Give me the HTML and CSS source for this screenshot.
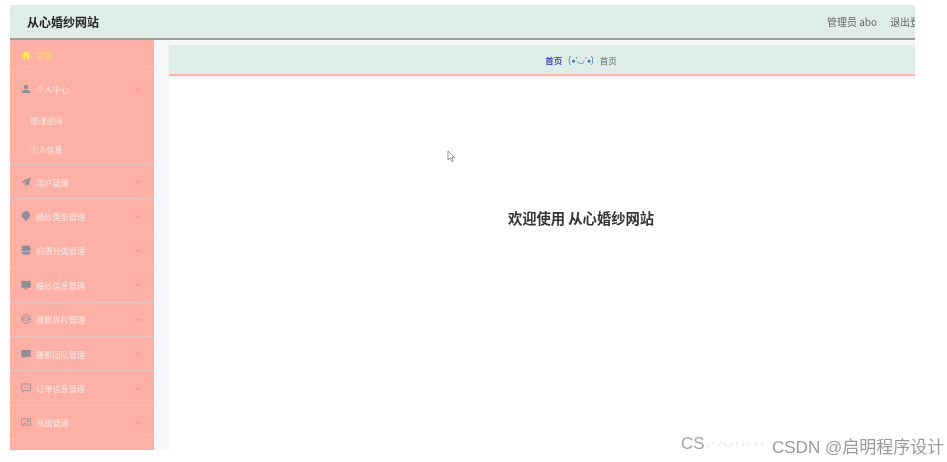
FILE: index.html
```html
<!DOCTYPE html>
<html lang="zh">
<head>
<meta charset="utf-8">
<title>从心婚纱网站</title>
<link rel="stylesheet" href="styles.css">
</head>
<body>
<div class="app">
  <header class="topbar">
    <div class="brand">从心婚纱网站</div>
    <div class="user"><span>管理员 abo</span><span class="logout">退出登录</span></div>
  </header>
  <div class="main">
    <nav class="side">
      <div class="item home">
        <svg class="ico" viewBox="0 0 16 16"><path d="M8 1.500 .5 8.500h2V15h4v-4h3v4h4V8.500h2z"/></svg>
        <span>首页</span>
      </div>
      <div class="group">
        <div class="item head">
          <svg class="ico" viewBox="0 0 16 16"><circle cx="8" cy="4.500" r="3.500"/><path d="M1 14.500c0-4 3-5.500 7-5.500s7 1.500 7 5.500z"/></svg>
          <span>个人中心</span>
          <svg class="arrow" viewBox="0 0 10 6"><path d="M1 5 5 1.500 9 5"/></svg>
        </div>
        <div class="sub">修改密码</div>
        <div class="sub">个人信息</div>
      </div>
      <div class="item row">
        <svg class="ico" viewBox="0 0 16 16"><path d="M15.500 .5 .5 8l4 1.500L12.500 4 6 10.500V15.500l3-3.500 3.500 1.500z"/></svg>
        <span>用户管理</span>
        <svg class="arrow" viewBox="0 0 10 6"><path d="M1 1.500 5 5 9 1.500"/></svg>
      </div>
      <div class="item row">
        <svg class="ico" viewBox="0 0 16 16"><path d="M8 .5a6.500 6.500 0 0 0-3.500 12c.6.400 1.500 1 1.500 1.500h4c0-.5.900-1.100 1.500-1.500A6.500 6.500 0 0 0 8 .5zM6.500 14.500h3V16h-3z"/></svg>
        <span>婚纱类型管理</span>
        <svg class="arrow" viewBox="0 0 10 6"><path d="M1 1.500 5 5 9 1.500"/></svg>
      </div>
      <div class="item row">
        <svg class="ico" viewBox="0 0 16 16"><path d="M3 1h10a2 2 0 0 1 2 2v7H1V3a2 2 0 0 1 2-2zM1 11h14v2l-2 2H3l-2-2z"/></svg>
        <span>拍摄分类管理</span>
        <svg class="arrow" viewBox="0 0 10 6"><path d="M1 1.500 5 5 9 1.500"/></svg>
      </div>
      <div class="item row">
        <svg class="ico" viewBox="0 0 16 16"><path d="M.5 1.500h15v11H.5zM5 13.500h6V15H5z"/></svg>
        <span>婚纱信息管理</span>
        <svg class="arrow" viewBox="0 0 10 6"><path d="M1 1.500 5 5 9 1.500"/></svg>
      </div>
      <div class="item row">
        <svg class="ico line" viewBox="0 0 16 16"><circle cx="8" cy="8" r="7"/><circle cx="8" cy="8" r="3.500"/><path d="M1 8h3.500M11.500 8H15"/></svg>
        <span>摄影样片管理</span>
        <svg class="arrow" viewBox="0 0 10 6"><path d="M1 1.500 5 5 9 1.500"/></svg>
      </div>
      <div class="item row">
        <svg class="ico" viewBox="0 0 16 16"><path d="M.5 1.500h15v11H7l-3 3v-3H.5z"/></svg>
        <span>摄影团队管理</span>
        <svg class="arrow" viewBox="0 0 10 6"><path d="M1 1.500 5 5 9 1.500"/></svg>
      </div>
      <div class="item row">
        <svg class="ico line" viewBox="0 0 16 16"><path d="M1 1.500h14v10.500H6l-3 3V12H1zM4.500 7h1.200M7.400 7h1.200M10.300 7h1.200"/></svg>
        <span>订单信息管理</span>
        <svg class="arrow" viewBox="0 0 10 6"><path d="M1 1.500 5 5 9 1.500"/></svg>
      </div>
      <div class="item row">
        <svg class="ico line" viewBox="0 0 16 16"><path d="M.5 3h15v10H.5zM3.500 10h5M10.500 6h2v2h-2z"/></svg>
        <span>系统管理</span>
        <svg class="arrow" viewBox="0 0 10 6"><path d="M1 1.500 5 5 9 1.500"/></svg>
      </div>
    </nav>
    <section class="content">
      <div class="crumb">
        <span class="link">首页</span>
        <span class="face">(<span class="dot">●</span>'◡'<span class="dot">●</span>)</span>
        <span>首页</span>
      </div>
      <div class="welcome">欢迎使用 从心婚纱网站</div>
    </section>
  </div>
</div>
<svg class="cursor" viewBox="0 0 9 13"><path d="M1 1v9l2.200-2 1.600 3.500 1.500-.7-1.600-3.300H7.500z"/></svg>
<div class="ghost">CS</div>
<svg class="noise" viewBox="0 0 70 12"><path d="M1 6l3-3M6 9l3-2M12 4l2 3M18 8l3-4M24 5l2 3M30 9l3-4M36 4l2 2M42 8l3-3M48 5l3 3M55 8l2-4M61 5l3 3"/></svg>
<div class="mark">CSDN @启明程序设计</div>
</body>
</html>
```
FILE: styles.css
```css
* { box-sizing: border-box; }
html, body { margin: 0; height: 100%; background: #fff; overflow: hidden; }
body { padding: 5px 32px 12px 10px; font-family: "Noto Sans CJK SC", "Liberation Sans", sans-serif; position: relative; }
.app { height: 445px; display: flex; flex-direction: column; overflow: hidden; filter: blur(0.45px); }
.topbar { height: 35px; flex: none; display: flex; align-items: center; justify-content: space-between; background: #deeee6; border-bottom: 2px solid #9a9d9b; padding-left: 17px; }
.brand { font-size: 12px; font-weight: 700; color: #222; }
.user { display: flex; gap: 13px; font-size: 10px; color: #666; white-space: nowrap; width: 88px; overflow: hidden; flex: none; padding-bottom: 1px; }
.main { flex: 1; display: flex; min-height: 0; }
.side { width: 144px; flex: none; background: #ffb0a4; color: #f3ebe7; font-size: 8.200px; overflow: hidden; }
.item { display: flex; align-items: center; padding: 0 12px 0 11px; }
.ico { width: 10px; height: 10px; flex: none; margin-right: 5px; fill: #8b8f9c; }
.ico.line { fill: none; stroke: #8b8f9c; stroke-width: 1.300; }
.arrow { width: 7px; height: 5px; margin-left: auto; fill: none; stroke: #ee7d80; stroke-width: 1; }
.home { height: 32px; padding-bottom: 2px; border-bottom: 1px solid #e3c6c2; color: #f6e25c; }
.home .ico { fill: #f7f04a; }
.group { border-bottom: 1px solid #e3c6c2; height: 93px; }
.head { height: 34px; }
.sub { height: 29px; padding-left: 20px; line-height: 29px; }
.row { height: 34.400px; border-bottom: 1px solid #e3c6c2; }
.content { flex: 1; min-width: 0; background: #fff; display: flex; flex-direction: column; border-left: 15px solid #f5f7f9; }
.crumb { flex: none; height: 36px; border-top: 5px solid #f5f7f9; border-bottom: 2px solid #ffb4a8; background: #deeee6; background-clip: padding-box; display: flex; align-items: center; justify-content: center; gap: 6px; font-size: 8.500px; color: #666; padding-left: 78px; box-shadow: 0 2px 3px #eef0f2; }
.link { color: #4a55c0; font-weight: 700; }
.face { color: #3c74b4; font-family: "Liberation Sans", "Noto Sans CJK SC", sans-serif; }
.dot { font-size: 7px; vertical-align: 0; }
.welcome { flex: 1; display: flex; justify-content: center; padding-top: 131px; font-size: 14.300px; font-weight: 700; color: #333; padding-left: 78px; }
.cursor { position: absolute; left: 447px; top: 150px; width: 9px; height: 13px; fill: #fff; stroke: #777; stroke-width: 0.8; }
.mark { position: absolute; left: 772px; top: 433px; font-size: 17px; color: #9a9a9a; white-space: nowrap; font-family: "Liberation Sans", "Noto Sans CJK SC", sans-serif; filter: blur(0.3px); }
.ghost { position: absolute; left: 681px; top: 434px; font-size: 17px; color: #a4a4a4; font-family: "Liberation Sans", sans-serif; filter: blur(0.3px); }
.noise { position: absolute; left: 700px; top: 438px; width: 70px; height: 12px; fill: none; stroke: #c4c4c4; stroke-width: 1; stroke-dasharray: 1 1; }
```
